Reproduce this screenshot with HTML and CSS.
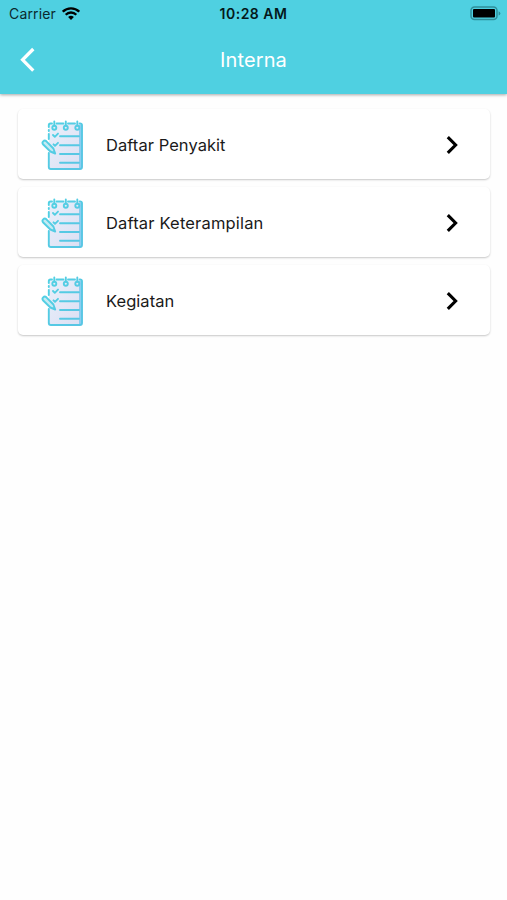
FILE: index.html
```html
<!DOCTYPE html>
<html lang="id">
<head>
    <meta charset="UTF-8">
    <meta name="viewport" content="width=device-width, initial-scale=1.0">
    <title>Interna</title>
    <link rel="stylesheet" href="styles.css">
</head>
<body>
    <svg width="0" height="0" class="sprite">
        <defs>
            <linearGradient id="paper" x1="0" y1="0" x2="1" y2="1">
                <stop offset="0" stop-color="#e9effa"/>
                <stop offset="1" stop-color="#dcdff3"/>
            </linearGradient>
            <linearGradient id="line" gradientUnits="userSpaceOnUse" x1="0" y1="0" x2="42" y2="30">
                <stop offset="0" stop-color="#4fd3e3"/>
                <stop offset="1" stop-color="#58c6e4"/>
            </linearGradient>
            <symbol id="notes" viewBox="0 0 42 50">
                <path d="M8 4h32.500v45h-32.500z" fill="url(#paper)"/>
                <path d="M38 5h3v43h-3z" fill="#8bcdf0"/>
                <g fill="none" stroke="url(#line)" stroke-width="1.9" stroke-linecap="round" stroke-linejoin="round">
                    <path d="M11 3.500H9.500Q7.800 3.500 7.800 5.200V7M7.800 10v1M7.800 14v5M7.800 33v14q0 2 2 2H39q2 0 2-2V5.200q0-1.700-2-1.700h-.500M15.500 3.500h7M27 3.500h7"/>
                    <path d="M13.300 1.500v4M24.800 1.500v4M36.300 1.500v4"/>
                    <circle cx="13.300" cy="7.700" r="2"/>
                    <circle cx="24.800" cy="7.700" r="2"/>
                    <circle cx="36.300" cy="7.700" r="2"/>
                    <path d="M12 15l1.800 1.800 3.200-3.200M12.500 24.300l1.500 1.500 3-3"/>
                    <path d="M19 16.200h19M19 25.300h19M19 34h19M19 42.800h19"/>
                    <path d="M2.200 21.300q1.500-1.500 3.200 0l7 7.200 1.800 5-4.800-2L2.200 24.500q-1.500-1.700 0-3.200z" fill="#c5ebf3"/>
                </g>
            </symbol>
            <symbol id="chevron" viewBox="0 0 12 18">
                <path d="M1.800 1.200L9.600 9l-7.800 7.800" fill="none" stroke="#000" stroke-width="3.100"/>
            </symbol>
        </defs>
    </svg>

    <header class="header">
        <div class="status-bar">
            <div class="carrier">
                <span>Carrier</span>
                <svg class="wifi" viewBox="0 0 18 13">
                    <g fill="none" stroke="#000" stroke-width="2.3">
                        <path d="M.8 4.700a11.700 11.700 0 0 1 16.400 0"/>
                        <path d="M3.700 7.700a7.500 7.500 0 0 1 10.600 0"/>
                    </g>
                    <path d="M9 13L6.100 10.100a4.100 4.100 0 0 1 5.800 0z"/>
                </svg>
            </div>
            <div class="clock">10:28 AM</div>
            <div class="battery">
                <svg width="31" height="15" viewBox="0 0 31 15">
                    <rect x="1" y="1" width="26" height="12.600" rx="3.500" fill="none" stroke="#2f8f9b" stroke-width="1.5"/>
                    <rect x="3" y="3" width="22" height="8.600" rx="1"/>
                    <path d="M28.600 5.200q1.800.7 1.800 2.200t-1.800 2.200z" fill="#2f8f9b"/>
                </svg>
            </div>
        </div>
        <div class="nav-bar">
            <svg class="back" viewBox="0 0 16 26">
                <path d="M13.300 2L2.600 12.800 13.300 23.600" fill="none" stroke="#fff" stroke-width="3.3"/>
            </svg>
            <h1>Interna</h1>
        </div>
    </header>

    <main class="menu">
        <a class="card">
            <svg class="card-icon"><use href="#notes"/></svg>
            <span class="card-title">Daftar Penyakit</span>
            <svg class="card-arrow"><use href="#chevron"/></svg>
        </a>
        <a class="card">
            <svg class="card-icon"><use href="#notes"/></svg>
            <span class="card-title card-title-wide">Daftar Keterampilan</span>
            <svg class="card-arrow"><use href="#chevron"/></svg>
        </a>
        <a class="card">
            <svg class="card-icon"><use href="#notes"/></svg>
            <span class="card-title">Kegiatan</span>
            <svg class="card-arrow"><use href="#chevron"/></svg>
        </a>
    </main>
</body>
</html>
```
FILE: styles.css
```css
* {
    margin: 0;
    padding: 0;
    box-sizing: border-box;
}

body {
    font-family: 'Inter', 'Open Sans', sans-serif;
    background: #fefefe;
    color: #1a1a1a;
    min-height: 100vh;
}

.sprite {
    display: block;
}

.header {
    height: 94px;
    background: #4fd0e1;
    box-shadow: 0 1px 3px rgba(0, 0, 0, 0.35);
}

.status-bar {
    height: 27px;
    padding: 0 6px 0 9px;
    display: grid;
    grid-template-columns: 1fr auto 1fr;
    align-items: center;
}

.carrier {
    display: flex;
    align-items: center;
    gap: 6px;
    font-size: 14px;
    letter-spacing: 0.15px;
    color: #0b2a2e;
}

.wifi {
    width: 18px;
    height: 13px;
    margin-top: -1px;
}

.clock {
    margin-right: 3px;
    font-size: 14px;
    font-weight: 600;
    letter-spacing: 0.5px;
    color: #04181a;
}

.battery {
    display: flex;
    justify-content: flex-end;
}

.nav-bar {
    height: 66px;
    padding: 0 20px;
    display: grid;
    grid-template-columns: 1fr auto 1fr;
    align-items: center;
}

.back {
    width: 16px;
    height: 26px;
}

.nav-bar h1 {
    color: #fff;
    font-size: 20px;
    font-weight: 400;
    line-height: 26px;
    letter-spacing: 0.1px;
}

.menu {
    padding: 15px 17px 0 18px;
    display: flex;
    flex-direction: column;
    gap: 8px;
}

.card {
    height: 70px;
    padding: 0 32px 0 23px;
    display: flex;
    align-items: center;
    background: #fff;
    border-radius: 5px;
    box-shadow: 0 1px 2px rgba(0, 0, 0, 0.22);
}

.card-icon {
    width: 42px;
    height: 50px;
    margin-top: 2px;
}

.card-title {
    flex: 1;
    margin-left: 23px;
    margin-top: 2px;
    font-size: 16.5px;
    letter-spacing: 0.05px;
}

.card-title-wide {
    letter-spacing: 0.17px;
}

.card-arrow {
    width: 12px;
    height: 18px;
    margin-top: 2px;
}
```
